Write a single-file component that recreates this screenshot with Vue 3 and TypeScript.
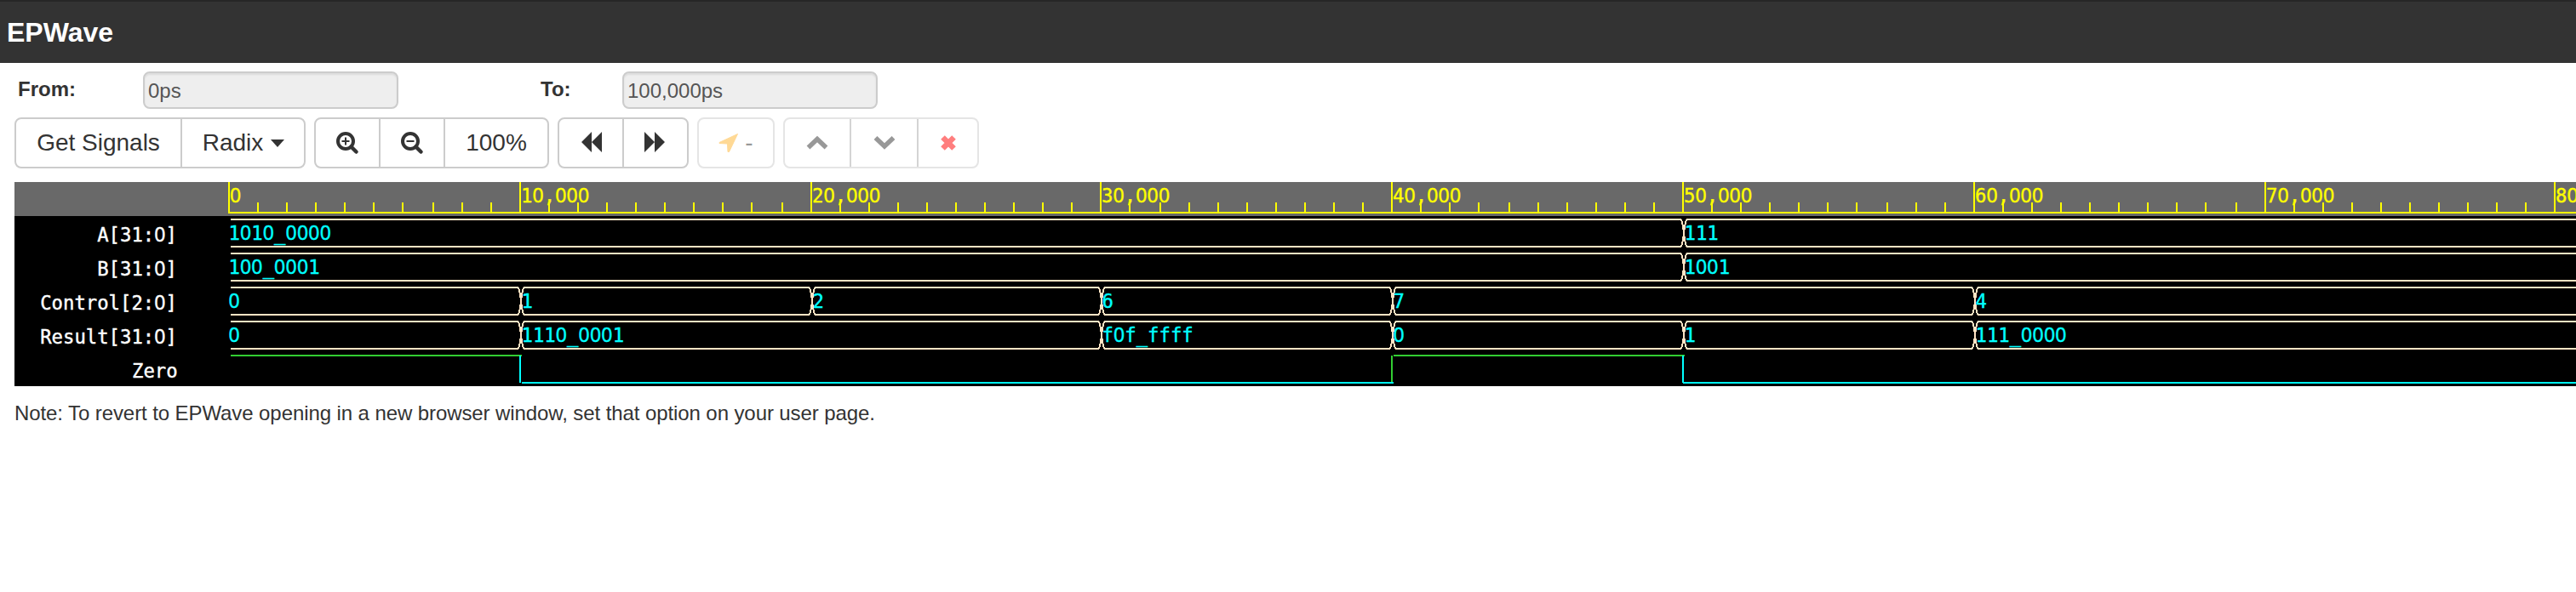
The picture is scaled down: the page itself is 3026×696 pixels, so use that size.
<script setup lang="ts">
interface Change { at: number; value: string }
interface Bus { name: string; changes: Change[] }

const width = 3009
const origin = 17
const snap = (t: number): number => Math.round(134 + 17.08 * t) * 2 - origin

const ticks = Array.from({ length: 81 }, (_, i) => ({
  x: snap(i),
  major: i % 10 === 0,
  label: i === 0 ? '0' : `${i},000`,
}))
const majors = ticks.filter((t) => t.major)

const buses: Bus[] = [
  { name: 'A[31:0]', changes: [{ at: 0, value: '1010_0000' }, { at: 50, value: '111' }] },
  { name: 'B[31:0]', changes: [{ at: 0, value: '100_0001' }, { at: 50, value: '1001' }] },
  {
    name: 'Control[2:0]',
    changes: [
      { at: 0, value: '0' }, { at: 10, value: '1' }, { at: 20, value: '2' },
      { at: 30, value: '6' }, { at: 40, value: '7' }, { at: 60, value: '4' },
    ],
  },
  {
    name: 'Result[31:0]',
    changes: [
      { at: 0, value: '0' }, { at: 10, value: '1110_0001' }, { at: 30, value: 'f0f_ffff' },
      { at: 40, value: '0' }, { at: 50, value: '1' }, { at: 60, value: '111_0000' },
    ],
  },
]

const rowTop = (i: number): number => 40 + i * 40

function busPath(bus: Bus, i: number): string {
  const top = rowTop(i) + 4
  const bottom = top + 32
  let d = ''
  bus.changes.forEach((c, k) => {
    const next = bus.changes[k + 1]
    const start = k === 0 ? 254 : snap(c.at) + 5
    const end = next ? snap(next.at) - 1 : width
    d += `M${start} ${top}H${end}M${start} ${bottom}H${end}`
    if (next) d += `M${end} ${top}l2 8l2 16l2 8M${end} ${bottom}l2 -8l2 -16l2 -8`
  })
  return d
}
const valueX = (c: Change): number => (c.at === 0 ? 251.5 : snap(c.at) + 2.5)
</script>

<template>
  <div class="page">
    <header class="bar"><h1>EPWave</h1></header>
    <div class="range">
      <label class="from">From:</label>
      <div class="field">0ps</div>
      <label class="to">To:</label>
      <div class="field">100,000ps</div>
    </div>
    <div class="toolbar">
      <div class="group g1">
        <button class="signals">Get Signals</button>
        <button class="radix">Radix<span class="caret"></span></button>
      </div>
      <div class="group g2">
        <button class="zin">
          <svg width="28" height="28" viewBox="0 0 28 28"><circle cx="12" cy="12" r="9" fill="none" stroke="#333" stroke-width="4" /><path d="M18.500 18.500l6 6" stroke="#333" stroke-width="4.500" stroke-linecap="round" /><path d="M7.500 12h9M12 7.500v9" stroke="#333" stroke-width="2" /></svg>
        </button>
        <button class="zout">
          <svg width="28" height="28" viewBox="0 0 28 28"><circle cx="12" cy="12" r="9" fill="none" stroke="#333" stroke-width="4" /><path d="M18.500 18.500l6 6" stroke="#333" stroke-width="4.500" stroke-linecap="round" /><path d="M7.500 12h9" stroke="#333" stroke-width="2" /></svg>
        </button>
        <button class="full">100%</button>
      </div>
      <div class="group g3">
        <button class="back"><svg width="26" height="24" viewBox="0 0 26 24"><path d="M13 0v24L1 12zM25 0v24L13 12z" fill="#333" /></svg></button>
        <button class="fwd"><svg width="26" height="24" viewBox="0 0 26 24"><path d="M1 0v24L13 12zM13 0v24L25 12z" fill="#333" /></svg></button>
      </div>
      <div class="group g4 off">
        <button class="cursor"><svg width="24" height="24" viewBox="0 0 24 24"><path d="M22.500 1.500L12.500 22.500L11 22.500L10.500 13L1 12.500L1 11.500z" fill="#ffb52e" stroke="#ffb52e" stroke-linejoin="round" /></svg><span>-</span></button>
      </div>
      <div class="group g5 off">
        <button class="up"><svg width="26" height="18" viewBox="0 0 26 18"><path d="M2.500 14.500L13 4.500L23.500 14.500" fill="none" stroke="#333" stroke-width="5.500" /></svg></button>
        <button class="down"><svg width="26" height="18" viewBox="0 0 26 18"><path d="M2.500 3L13 13L23.500 3" fill="none" stroke="#333" stroke-width="5.500" /></svg></button>
        <button class="del"><svg width="20" height="20" viewBox="0 0 20 20"><path d="M3.500 3.500L16.500 16.500M16.500 3.500L3.500 16.500" stroke="#f00" stroke-width="6.500" /></svg></button>
      </div>
    </div>
    <svg class="wave" :width="width" height="240">
      <rect :width="width" height="240" fill="#000" />
      <rect :width="width" height="40" fill="#696969" />
      <g fill="#ff0" shape-rendering="crispEdges">
        <rect x="251" y="35" :width="width - 251" height="2" />
        <rect v-for="t in ticks" :key="t.x" :x="t.x" :y="t.major ? 0 : 24" width="2" :height="t.major ? 36 : 11" />
      </g>
      <text v-for="t in majors" :key="t.x" class="mono yellow" :y="24"><tspan v-for="(ch, k) in t.label" :key="k" :x="t.x + 2 + k * 13.4" :class="{ zero: ch === '0' }">{{ ch }}</tspan></text>
      <g v-for="(b, i) in buses" :key="b.name">
        <text class="mono white" :y="rowTop(i) + 30"><tspan v-for="(ch, k) in b.name" :key="k" :x="191 - (b.name.length - k) * 13.4" :class="{ zero: ch === '0' }">{{ ch }}</tspan></text>
        <path :d="busPath(b, i)" fill="none" stroke="#ffe4c4" stroke-width="2" shape-rendering="crispEdges" />
        <text v-for="c in b.changes" :key="c.at" class="mono cyan" :y="rowTop(i) + 28"><tspan v-for="(ch, k) in c.value" :key="k" :x="valueX(c) + k * 13.4" :class="{ zero: ch === '0' }">{{ ch }}</tspan></text>
      </g>
      <text class="mono white" x="138" y="230">Zero</text>
      <g fill="none" stroke-width="2" shape-rendering="crispEdges">
        <path d="M254 204H596M1618 235V204M1620 204H1962" stroke="#32cd32" />
        <path d="M594 204V236M596 236H1620M1960 204V236M1960 236H3009" stroke="#0ff" />
      </g>
    </svg>
    <p class="note">Note: To revert to EPWave opening in a new browser window, set that option on your user page.</p>
  </div>
</template>

<style>
body { margin: 0; background: #fff; }
</style>
<style scoped>
.page { width: 3026px; height: 696px; overflow: hidden; background: #fff; color: #333; font-family: "Liberation Sans", Arial, sans-serif; font-size: 24px; }
.bar { height: 74px; box-sizing: border-box; background: #333; border-top: 2px solid #262626; padding-left: 8px; }
h1 { margin: 0; font-size: 32px; line-height: 72px; color: #fff; }
.range { display: flex; height: 44px; margin-top: 10px; padding-left: 21px; line-height: 42px; }
label { font-weight: bold; }
.from { width: 147px; }
.to { width: 96px; margin-left: 167px; }
.field { width: 300px; height: 44px; box-sizing: border-box; border: 2px solid #ccc; border-radius: 8px; background: #eee; color: #555; padding-left: 4px; line-height: 41px; box-shadow: inset 0 2px 2px rgba(0,0,0,.075); }
.toolbar { display: flex; gap: 10px; height: 60px; margin: 10px 0 0 17px; }
.group { display: flex; box-sizing: border-box; border: 2px solid #ccc; border-radius: 8px; height: 60px; }
.g1 { width: 342px; } .g2 { width: 276px; } .g3 { width: 154px; } .g4 { width: 91px; } .g5 { width: 230px; }
.off { opacity: .5; }
.off button { color: #333; }
button { box-sizing: border-box; margin: 0; padding: 0; border: 0; background: none; color: #333; font: 28px "Liberation Sans", Arial, sans-serif; display: flex; align-items: center; justify-content: center; height: 56px; }
button + button { border-left: 2px solid #ccc; }
.off button + button { border-left-color: #aaa; }
.signals { width: 193px; } .radix { flex: 1; }
.caret { border: 8px solid transparent; border-top: 9px solid #333; border-bottom: 0; margin: 0 -1px 0 9px; }
.zin { width: 74px; } .zout { width: 76px; } .full { flex: 1; }
.back { width: 74px; } .back svg { margin: 0 -2px 2px 0; }
.fwd { flex: 1; } .fwd svg { margin: 0 3px 2px 0; }
.cursor { flex: 1; gap: 7px; }
.up { width: 76px; } .down { width: 79px; } .del { flex: 1; }
.wave { display: block; margin: 16px 0 0 17px; }
.mono { font-family: "DejaVu Sans Mono", monospace; font-size: 22.25px; stroke-width: .4px; }
.yellow { fill: #ff0; stroke: #ff0; }
.white { fill: #fff; stroke: #fff; }
.cyan { fill: #0ff; stroke: #0ff; }
.zero { font-family: "Noto Sans", sans-serif; font-size: 23px; }
.note { margin: 18px 0 0 17px; line-height: 28px; letter-spacing: -.09px; }
</style>
